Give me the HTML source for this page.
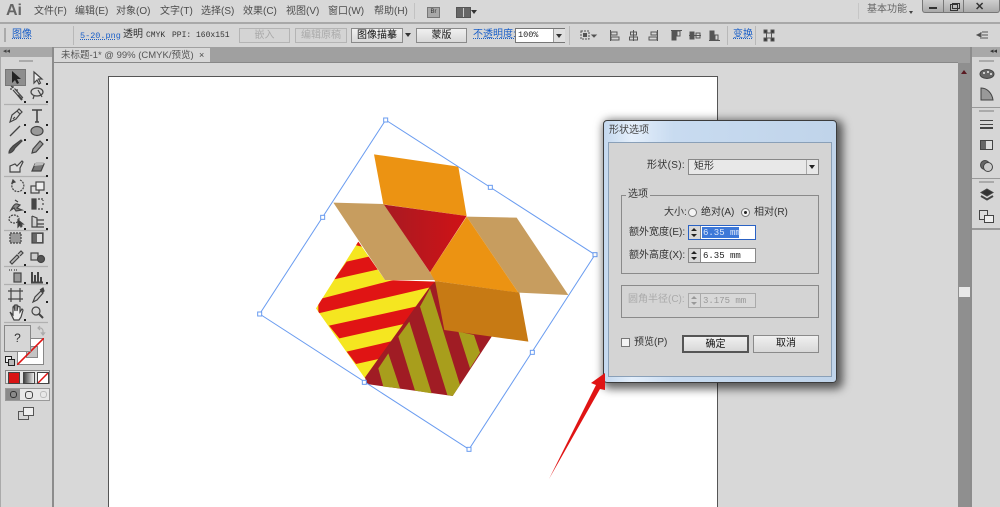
<!DOCTYPE html>
<html><head><meta charset="utf-8">
<style>
html,body{margin:0;padding:0;width:1000px;height:507px;overflow:hidden;background:#d8d8d8}
body{position:relative;font-family:"Liberation Sans","Noto Sans CJK SC",sans-serif;font-size:10px;color:#333;filter:blur(.35px)}
.a{position:absolute}
.t{position:absolute;white-space:nowrap;line-height:12px}
.m{font-family:"Liberation Mono","Noto Sans CJK SC",monospace}
.btn{position:absolute;box-sizing:border-box;border:1px solid #8a8a8a;background:linear-gradient(#f0f0f0,#d8d8d8);text-align:center;font-size:10px;line-height:13px;color:#222}
.dis{color:#aaa;border-color:#b4b4b4;background:#d4d4d4}
.blue{color:#1a5fc8;text-decoration:underline;text-decoration-style:dotted}
</style></head><body>

<!-- menu bar -->
<div class="a" style="left:0;top:0;width:1000px;height:23px;background:#d8d8d8"></div>
<div class="t" style="left:6px;top:1px;font-size:16px;line-height:20px;font-weight:bold;color:#666">Ai</div>
<div class="t" style="left:34px;top:6px;color:#4c4c4c">文件(F)</div>
<div class="t" style="left:75px;top:6px;color:#4c4c4c">编辑(E)</div>
<div class="t" style="left:116px;top:6px;color:#4c4c4c">对象(O)</div>
<div class="t" style="left:160px;top:6px;color:#4c4c4c">文字(T)</div>
<div class="t" style="left:201px;top:6px;color:#4c4c4c">选择(S)</div>
<div class="t" style="left:243px;top:6px;color:#4c4c4c">效果(C)</div>
<div class="t" style="left:286px;top:6px;color:#4c4c4c">视图(V)</div>
<div class="t" style="left:328px;top:6px;color:#4c4c4c">窗口(W)</div>
<div class="t" style="left:374px;top:6px;color:#4c4c4c">帮助(H)</div>
<div class="a" style="left:414px;top:3px;width:1px;height:16px;background:#c2c2c2"></div>
<div class="a" style="left:427px;top:7px;width:11px;height:9px;background:#a8a8a8;border:1px solid #777;font-size:6px;line-height:9px;text-align:center;color:#333">Br</div>
<div class="a" style="left:456px;top:7px;width:13px;height:9px;border:1px solid #555;background:linear-gradient(90deg,#666 45%,#ccc 45%,#ccc 55%,#666 55%)"></div>
<div class="a" style="left:471px;top:10px;border:3px solid transparent;border-top:4px solid #333"></div>
<div class="a" style="left:858px;top:3px;width:1px;height:16px;background:#c6c6c6"></div>
<div class="t" style="left:867px;top:4px;color:#666">基本功能</div>
<div class="a" style="left:909px;top:11px;border:2px solid transparent;border-top:3px solid #444"></div>
<div class="a" style="left:922px;top:0;width:78px;height:13px;box-sizing:border-box;background:linear-gradient(#cfcfcf,#aaa);border:1px solid #777;border-top:0;border-radius:0 0 3px 3px"></div>
<div class="a" style="left:943px;top:0;width:1px;height:13px;background:#777"></div>
<div class="a" style="left:963px;top:0;width:1px;height:13px;background:#777"></div>
<div class="a" style="left:929px;top:7px;width:8px;height:2px;background:#333"></div>
<div class="a" style="left:950px;top:4px;width:6px;height:5px;border:1px solid #333"></div>
<div class="a" style="left:952px;top:3px;width:6px;height:4px;border:1px solid #333"></div>
<div class="t" style="left:975px;top:1px;font-size:11px;font-weight:bold;color:#333">✕</div>

<!-- control bar -->
<div class="a" style="left:0;top:22px;width:1000px;height:2px;background:#a8a8a8"></div>
<div class="a" style="left:0;top:24px;width:1000px;height:23px;background:#d6d6d6"></div>
<div class="a" style="left:4px;top:28px;width:2px;height:14px;background:#aaa"></div>
<div class="t blue" style="left:12px;top:29px">图像</div>
<div class="a" style="left:73px;top:26px;width:1px;height:19px;background:#b8b8b8"></div>
<div class="t blue m" style="left:80px;top:30px;font-size:8.5px">5-20.png</div>
<div class="t" style="left:123px;top:29px;color:#333">透明</div>
<div class="t m" style="left:146px;top:30px;font-size:8px;color:#333">CMYK</div>
<div class="t m" style="left:172px;top:30px;font-size:8px;color:#333">PPI: 160x151</div>
<div class="btn dis" style="left:239px;top:28px;width:51px;height:15px">嵌入</div>
<div class="btn dis" style="left:295px;top:28px;width:52px;height:15px">编辑原稿</div>
<div class="btn" style="left:351px;top:28px;width:52px;height:15px;color:#111">图像描摹</div>
<div class="a" style="left:405px;top:33px;border:3px solid transparent;border-top:4px solid #333"></div>
<div class="btn" style="left:416px;top:28px;width:51px;height:15px;color:#111">蒙版</div>
<div class="t blue" style="left:473px;top:29px">不透明度:</div>
<div class="a" style="left:515px;top:28px;width:50px;height:15px;box-sizing:border-box;border:1px solid #777;background:#fff"></div>
<div class="t m" style="left:518px;top:29px;font-size:8.5px;color:#222">100%</div>
<div class="a" style="left:553px;top:29px;width:11px;height:13px;background:#e0e0e0;border-left:1px solid #999"></div>
<div class="a" style="left:556px;top:34px;border:3px solid transparent;border-top:4px solid #333"></div>
<div class="a" style="left:569px;top:26px;width:1px;height:19px;background:#b8b8b8"></div>
<div class="a" style="left:727px;top:26px;width:1px;height:19px;background:#b8b8b8"></div>
<div class="a" style="left:755px;top:26px;width:1px;height:19px;background:#b8b8b8"></div>
<div class="t blue" style="left:733px;top:29px">变换</div>
<svg class="a" style="left:570px;top:24px" width="430" height="23" viewBox="570 24 430 23" fill="none" stroke="#555">
<rect x="581" y="31" width="8" height="8" stroke-dasharray="2 1"/><rect x="583.500" y="33.500" width="3" height="3" fill="#555"/><path d="M592 35h4l-2 2z" fill="#444"/>
<path d="M610.500 30v11M611 32h6v3h-6zM611 37h8v3h-8z"/>
<path d="M633.500 30v11M630.500 32h6v3h-6zM629.500 37h8v3h-8z"/>
<path d="M657.500 30v11M651 32h6v3h-6zM649 37h8v3h-8z"/>
<path d="M671 30.500h11M672 31h4v9h-4zM677 31h3v5h-3z"/><path d="M672 31h4v9h-4z" fill="#555"/>
<path d="M689 35.500h12M690 32h4v7h-4zM696 33h4v5h-4z"/><path d="M690 32h4v7h-4z" fill="#555"/>
<path d="M709 40.500h11M710 31h4v9h-4zM715 35h3v5h-3z"/><path d="M710 31h4v9h-4z" fill="#555"/>
<path d="M766 33h6M766 38h6M766.500 33v5M771.500 33v5" />
<path d="M764 30h3v3h-3zM771 30h3v3h-3zM764 38h3v3h-3zM771 38h3v3h-3z" fill="#333"/>
<path d="M977 35l3-1.500v3z" fill="#333"/><path d="M982 32h6M982 35h6M982 38h6M981 32v7"/>
</svg>

<!-- doc tab row -->
<div class="a" style="left:53px;top:47px;width:919px;height:16px;background:#a0a0a0"></div>
<div class="a" style="left:54px;top:48px;width:156px;height:15px;background:#d8d8d8"></div>
<div class="t" style="left:61px;top:50px;font-size:9.500px;color:#555">未标题-1* @ 99% (CMYK/预览)</div>
<div class="t" style="left:199px;top:49px;font-size:9px;color:#444">×</div>
<div class="a" style="left:53px;top:62px;width:905px;height:1px;background:#888"></div>

<!-- canvas -->
<div class="a" style="left:108px;top:76px;width:610px;height:431px;box-sizing:border-box;background:#fff;border:1px solid #555;border-bottom:0"></div>

<!-- artwork -->
<svg class="a" style="left:250px;top:110px" width="350" height="350" viewBox="0 0 1050 1050">
<defs>
<clipPath id="lf"><polygon points="325,395 198,595 345,805 555,515 405,510"/></clipPath>
<linearGradient id="rt" x1="0" y1="0" x2="1" y2="0"><stop offset="0" stop-color="#a81a22"/><stop offset="1" stop-color="#d01216"/></linearGradient>
</defs>
<polygon points="325,395 198,595 345,805 555,515 405,510" fill="#f5e620"/>
<g clip-path="url(#lf)" fill="#e01414">
<polygon points="315,385 345,395 335,410 315,405"/>
<polygon points="290,455 365,438 385,478 252,508"/>
<polygon points="205,568 430,510 570,510 540,532 205,610"/>
<polygon points="237,647 510,587 470,640 268,685"/>
<polygon points="290,725 440,690 408,742 318,762"/>
</g>
<polygon points="540,530 555,515 725,680 608,858 350,822 345,802" fill="#a01c24"/>
<g fill="#a89e1c">
<polygon points="540,535 630,825 608,858 592,855 510,590"/>
<polygon points="478,635 545,850 495,842 445,680"/>
<polygon points="415,730 450,835 400,830 385,775"/>
<polygon points="625,665 672,675 690,728 660,775"/>
</g>
<polygon points="250,278 402,282 555,510 405,510" fill="#c79d5f"/>
<polygon points="650,320 800,323 955,555 805,548" fill="#c79d5f"/>
<polygon points="372,133 625,170 650,318 400,283" fill="#ec9312"/>
<polygon points="402,284 650,318 540,487" fill="url(#rt)"/>
<polygon points="650,320 805,548 555,513 540,487" fill="#ec9312"/>
<polygon points="555,513 808,548 835,695 583,660" fill="#c77a14"/>
<g fill="none" stroke="#6a9cf0" stroke-width="3">
<polygon points="407,30 1035,434 657,1018 29,612"/>
<g fill="#fff">
<rect x="401" y="24" width="12" height="12"/><rect x="1029" y="428" width="12" height="12"/><rect x="651" y="1012" width="12" height="12"/><rect x="23" y="606" width="12" height="12"/>
<rect x="715" y="226" width="12" height="12"/><rect x="212" y="316" width="12" height="12"/><rect x="841" y="721" width="12" height="12"/><rect x="337" y="811" width="12" height="12"/>
</g></g>
</svg>

<!-- left toolbar -->
<div class="a" style="left:0;top:47px;width:52px;height:460px;background:#d6d6d6"></div>
<div class="a" style="left:0;top:47px;width:52px;height:10px;background:#a8a8a8"></div>
<div class="t" style="left:3px;top:46px;font-size:7px;color:#444">◂◂</div>
<div class="a" style="left:52px;top:47px;width:2px;height:460px;background:#8c8c8c"></div>
<div class="a" style="left:0;top:57px;width:1px;height:450px;background:#aaa"></div>
<div class="a" style="left:19px;top:60px;width:14px;height:2px;background:#aaa"></div>
<div class="a" style="left:5px;top:69px;width:21px;height:17px;background:#8e8e8e;border:1px solid #777;box-sizing:border-box"></div>
<svg class="a" style="left:0;top:57px" width="52" height="450" viewBox="0 57 52 450" fill="none" stroke="#444" stroke-width="1.200">
<path d="M12 71l0 12 3-3 2 4 2-1-2-4 4 0z" fill="#222" stroke="none"/>
<path d="M34 72l0 11 3-3 2 4 1.500-1-2-4 3.500 0z" fill="#eee"/>
<path d="M13 90l8 9 1.500-1.500-8-9M10 89h2M16 90h2M13 86v2M11 86l2 2" /><path d="M18 95l4 5" stroke-width="2"/>
<ellipse cx="37" cy="92" rx="6" ry="4"/><path d="M34 96l-1 3M38 90l4 7z" fill="#eee"/>
<path d="M4 104.500h44M4 176.500h44M4 230.500h44M4 266.500h44M4 284.500h44M4 322.500h44" stroke="#b0b0b0"/>
<path d="M10 122l2-7 5-4 3 3-4 5z M13 119l2-2M17 111l2-2 3 3-2 2" /><path d="M32 110h10M37 110v12M35 122h4" stroke-width="1.600"/>
<path d="M10 136l10-10" stroke-width="1.300"/><ellipse cx="37" cy="131" rx="6" ry="4.500" fill="#999"/>
<path d="M9 153c3 0 5-3 6-5l7-7-1-1-8 6c-2 2-4 4-4 7z" fill="#555"/><path d="M32 153l1-4 7-8 3 3-7 8z" fill="#999"/>
<path d="M10 172v-6l5-2 2 2 5-5 1 1-3 6 0 4z" fill="#ddd"/>
<path d="M32 171l3-7h9l-3 7z" fill="#777"/><path d="M34 166l2-4h8l-1 3z" fill="#bbb" stroke="none"/>
<path d="M20 180a6 6 0 1 1-7 2" stroke-dasharray="2 1"/><path d="M12 183l1-3 2 2z" fill="#444"/>
<rect x="31" y="186" width="8" height="7" fill="#ddd"/><rect x="36" y="182" width="8" height="8" fill="#eee"/>
<path d="M11 210c2-4 4-7 6-6l3 1-3 3 5 2-6 1-2-3zM15 200l3 2" fill="#888"/>
<path d="M32 199h4v10h-4z" fill="#444"/><path d="M38 199h5v2M38 209h5M43 203v3" stroke-dasharray="2 1"/>
<ellipse cx="14" cy="219" rx="5" ry="4" stroke-dasharray="2 1"/><path d="M18 220l0 7 2-2 1 2 1-1-1-2 2 0z" fill="#333"/>
<path d="M32 216v11h12M32 216l5 2v9M37 220h7M37 224h7" fill="#ccc"/>
<rect x="10" y="233" width="11" height="10" fill="#999" stroke-dasharray="2 1"/>
<rect x="32" y="233" width="11" height="10" fill="#666"/><rect x="37" y="234" width="5" height="8" fill="#ddd" stroke="none"/>
<path d="M10 262l7-7 2 2-7 7zM18 254l3-3 2 2-3 3" fill="#bbb"/>
<rect x="31" y="253" width="7" height="7" fill="#ccc"/><circle cx="41" cy="259" r="3.500" fill="#555"/>
<rect x="14" y="273" width="7" height="9" fill="#999"/><path d="M9 270h3M14 270h3" stroke-dasharray="1 1"/>
<path d="M32 282v-10M35 282v-7M38 282v-10M41 282v-5M31 282.500h12" stroke-width="2"/>
<rect x="11" y="291" width="9" height="8"/><path d="M11 288v3M20 288v3M8 291h3M8 299h3M20 302v-3M11 302v-3M20 299h3M20 291h3"/>
<path d="M33 302l2-5 6-6 2 2-6 7z" fill="#ccc"/><path d="M40 290l3-2 1 3-2 2" fill="#444"/>
<path d="M10 312l3 3v-8l1-1 1 5v-6h2v6l1-5 2 1v5l2-3 1 1-2 7-2 3h-5z" fill="#eee"/>
<circle cx="36" cy="311" r="4"/><path d="M39 314l4 4" stroke-width="2"/>
<path d="M38 328h2a3 3 0 0 1 3 3v2M40 326l-2 2 2 2M43 335l-1.500-2h3z" stroke="#aaa" fill="none"/>
</svg>
<svg class="a" style="left:0;top:0" width="52" height="507" viewBox="0 0 52 507" fill="#222">
<path d="M24 101h2v2h-2zM46 83h2v2h-2zM46 101h2v2h-2zM24 124h2v2h-2zM46 124h2v2h-2zM24 139h2v2h-2zM46 139h2v2h-2zM46 157h2v2h-2zM46 175h2v2h-2zM24 192h2v2h-2zM46 192h2v2h-2zM24 211h2v2h-2zM46 211h2v2h-2zM24 228h2v2h-2zM46 228h2v2h-2zM24 264h2v2h-2zM24 282h2v2h-2zM46 282h2v2h-2zM46 301h2v2h-2zM24 319h2v2h-2z"/>
</svg>
<!-- fill / stroke -->
<div class="a" style="left:17px;top:338px;width:27px;height:27px;box-sizing:border-box;background:#fff;border:1px solid #888"></div>
<div class="a" style="left:26px;top:346px;width:10px;height:10px;background:#c4c4c4;border:1px solid #888"></div>
<svg class="a" style="left:17px;top:338px" width="27" height="27"><path d="M0 27L27 0" stroke="#e01414" stroke-width="1.600"/></svg>
<div class="a" style="left:4px;top:325px;width:27px;height:27px;box-sizing:border-box;background:#d6d6d6;border:1px solid #888;text-align:center;font-size:12px;line-height:25px;color:#333">?</div>
<div class="a" style="left:5px;top:356px;width:5px;height:5px;border:1px solid #222;background:#eee"></div>
<div class="a" style="left:8px;top:359px;width:5px;height:5px;border:1px solid #222;background:#bbb"></div>
<div class="a" style="left:5px;top:370px;width:45px;height:14px;box-sizing:border-box;border:1px solid #888;background:#e4e4e4"></div>
<div class="a" style="left:8px;top:372px;width:10px;height:10px;background:#d81414;border:1px solid #444"></div>
<div class="a" style="left:23px;top:372px;width:10px;height:10px;background:linear-gradient(90deg,#444,#eee);border:1px solid #444"></div>
<div class="a" style="left:37px;top:372px;width:10px;height:10px;background:#fff;border:1px solid #444"></div>
<svg class="a" style="left:38px;top:373px" width="10" height="10"><path d="M0 10L10 0" stroke="#e01414" stroke-width="1.500"/></svg>
<div class="a" style="left:5px;top:388px;width:45px;height:13px;box-sizing:border-box;border:1px solid #999;background:#e8e8e8"></div>
<div class="a" style="left:6px;top:389px;width:14px;height:11px;background:#8a8a8a"></div>
<div class="a" style="left:10px;top:391px;width:5px;height:5px;border:1px solid #333;border-radius:3px"></div>
<div class="a" style="left:25px;top:391px;width:6px;height:6px;border:1px solid #444;border-radius:3px"></div>
<div class="a" style="left:40px;top:391px;width:5px;height:5px;border:1px solid #bbb;border-radius:3px"></div>
<div class="a" style="left:18px;top:411px;width:9px;height:7px;border:1px solid #555"></div>
<div class="a" style="left:23px;top:407px;width:9px;height:7px;border:1px solid #555;background:#eee"></div>

<!-- scrollbar -->
<div class="a" style="left:958px;top:63px;width:12px;height:444px;background:#8f8f8f"></div>
<div class="a" style="left:961px;top:70px;border:3px solid transparent;border-bottom:4px solid #5a1a22;border-top:0"></div>
<div class="a" style="left:959px;top:287px;width:11px;height:10px;background:#e8e8e8"></div>

<!-- right panel -->
<div class="a" style="left:970px;top:47px;width:2px;height:460px;background:#8c8c8c"></div>
<div class="a" style="left:972px;top:47px;width:28px;height:460px;background:#d6d6d6"></div>
<div class="a" style="left:972px;top:47px;width:28px;height:10px;background:#a8a8a8"></div>
<div class="t" style="left:990px;top:46px;font-size:7px;color:#333">◂◂</div>
<div class="a" style="left:972px;top:107px;width:28px;height:1px;background:#999"></div>
<div class="a" style="left:972px;top:178px;width:28px;height:1px;background:#999"></div>
<div class="a" style="left:972px;top:228px;width:28px;height:2px;background:#999"></div>
<svg class="a" style="left:972px;top:57px" width="28" height="175" viewBox="972 57 28 175" fill="none" stroke="#444">
<path d="M979 61h15M979 111h15M979 182h15" stroke="#aaa" stroke-width="2"/>
<ellipse cx="987" cy="74" rx="7" ry="4.500" fill="#666"/><circle cx="984" cy="73" r="1" fill="#eee" stroke="none"/><circle cx="988" cy="72" r="1" fill="#eee" stroke="none"/><circle cx="991" cy="74" r="1" fill="#eee" stroke="none"/>
<path d="M981 88c6 0 11 5 12 12h-12z" fill="#999"/>
<path d="M980 120.500h13M980 124.500h13" /><path d="M980 128h13" stroke-width="2"/>
<rect x="980.500" y="140.500" width="12" height="9" fill="#666"/><rect x="986" y="141" width="6" height="8" fill="#ddd" stroke="none"/>
<circle cx="985" cy="165" r="4.500" fill="#666"/><circle cx="988" cy="167" r="4.500" fill="#ccc"/>
<path d="M987 189l6 3.500-6 3.500-6-3.500z" fill="#333"/><path d="M981 196l6 3.500 6-3.500" stroke-width="2"/>
<rect x="979.500" y="210.500" width="8" height="9" fill="#ddd"/><rect x="984.500" y="215.500" width="9" height="7" fill="#eee"/>
</svg>

<!-- dialog shadow and frame -->
<div class="a" style="left:603px;top:120px;width:234px;height:263px;box-sizing:border-box;border:1px solid #3c3c3c;border-radius:4px;background:linear-gradient(90deg,#c4d8ee 0%,#e4effb 12%,#c8dbf0 30%,#c0d4ea 100%);box-shadow:3px 3px 9px 3px rgba(0,0,0,.6)"></div>
<div class="t" style="left:609px;top:125px;font-size:10px;color:#444">形状选项</div>
<div class="a" style="left:608px;top:142px;width:224px;height:235px;box-sizing:border-box;background:#d4d4d4;border:1px solid #8aa0b8"></div>

<div class="t" style="left:647px;top:160px;letter-spacing:.3px" >形状(S):</div>
<div class="a" style="left:688px;top:159px;width:131px;height:16px;box-sizing:border-box;border:1px solid #888;background:#e8e8e8"></div>
<div class="t" style="left:694px;top:161px">矩形</div>
<div class="a" style="left:806px;top:160px;width:1px;height:14px;background:#aaa"></div>
<div class="a" style="left:809px;top:165px;border:3px solid transparent;border-top:4px solid #222"></div>

<div class="a" style="left:621px;top:195px;width:198px;height:79px;box-sizing:border-box;border:1px solid #8a8a8a"></div>
<div class="t" style="left:626px;top:189px;background:#d4d4d4;padding:0 2px">选项</div>
<div class="t" style="left:664px;top:207px">大小:</div>
<div class="a" style="left:688px;top:208px;width:9px;height:9px;box-sizing:border-box;border:1px solid #777;border-radius:50%;background:#f4f4f4"></div>
<div class="t" style="left:701px;top:207px">绝对(A)</div>
<div class="a" style="left:741px;top:208px;width:9px;height:9px;box-sizing:border-box;border:1px solid #777;border-radius:50%;background:#f4f4f4"></div>
<div class="a" style="left:744px;top:211px;width:3px;height:3px;border-radius:50%;background:#222"></div>
<div class="t" style="left:754px;top:207px">相对(R)</div>

<div class="t" style="left:629px;top:227px">额外宽度(E):</div>
<div class="a" style="left:688px;top:225px;width:68px;height:15px;box-sizing:border-box;border:1px solid #2a62c4;background:#fff"></div>
<div class="a" style="left:689px;top:226px;width:11px;height:13px;background:#d8d8d8;border-right:1px solid #888"></div>
<div class="a" style="left:702px;top:227px;width:37px;height:11px;background:#3d78d8"></div>
<div class="t m" style="left:703px;top:227px;font-size:9px;color:#dfe9fa">6.35 mm</div>

<div class="t" style="left:629px;top:250px">额外高度(X):</div>
<div class="a" style="left:688px;top:248px;width:68px;height:15px;box-sizing:border-box;border:1px solid #888;background:#fff"></div>
<div class="a" style="left:689px;top:249px;width:11px;height:13px;background:#d8d8d8;border-right:1px solid #888"></div>
<div class="t m" style="left:703px;top:250px;font-size:9px;color:#222">6.35 mm</div>

<div class="a" style="left:621px;top:285px;width:198px;height:33px;box-sizing:border-box;border:1px solid #8a8a8a"></div>
<div class="t" style="left:628px;top:294px;color:#aaa">圆角半径(C):</div>
<div class="a" style="left:688px;top:293px;width:68px;height:15px;box-sizing:border-box;border:1px solid #aaa;background:#d8d8d8"></div>
<div class="a" style="left:689px;top:294px;width:11px;height:13px;border-right:1px solid #aaa"></div>
<div class="t m" style="left:703px;top:295px;font-size:9px;color:#999">3.175 mm</div>

<svg class="a" style="left:688px;top:225px" width="12" height="85" fill="#222">
<path d="M6 3l3 3H3zM3 9h6l-3 3zM6 26l3 3H3zM3 32h6l-3 3z"/>
<path d="M6 71l3 3H3zM3 77h6l-3 3z" fill="#999"/>
</svg>

<div class="a" style="left:621px;top:338px;width:9px;height:9px;box-sizing:border-box;border:1px solid #777;background:#f4f4f4"></div>
<div class="t" style="left:634px;top:337px">预览(P)</div>
<div class="btn" style="left:682px;top:335px;width:67px;height:18px;border:2px solid #555;line-height:15px;color:#111">确定</div>
<div class="btn" style="left:753px;top:335px;width:66px;height:18px;line-height:16px;color:#111">取消</div>

<!-- arrow -->
<svg class="a" style="left:540px;top:365px" width="75" height="120" viewBox="540 365 75 120">
<polygon points="605,373 591,383 596,385 549,479 600,389 605,390" fill="#e01414"/>
</svg>
</body></html>
